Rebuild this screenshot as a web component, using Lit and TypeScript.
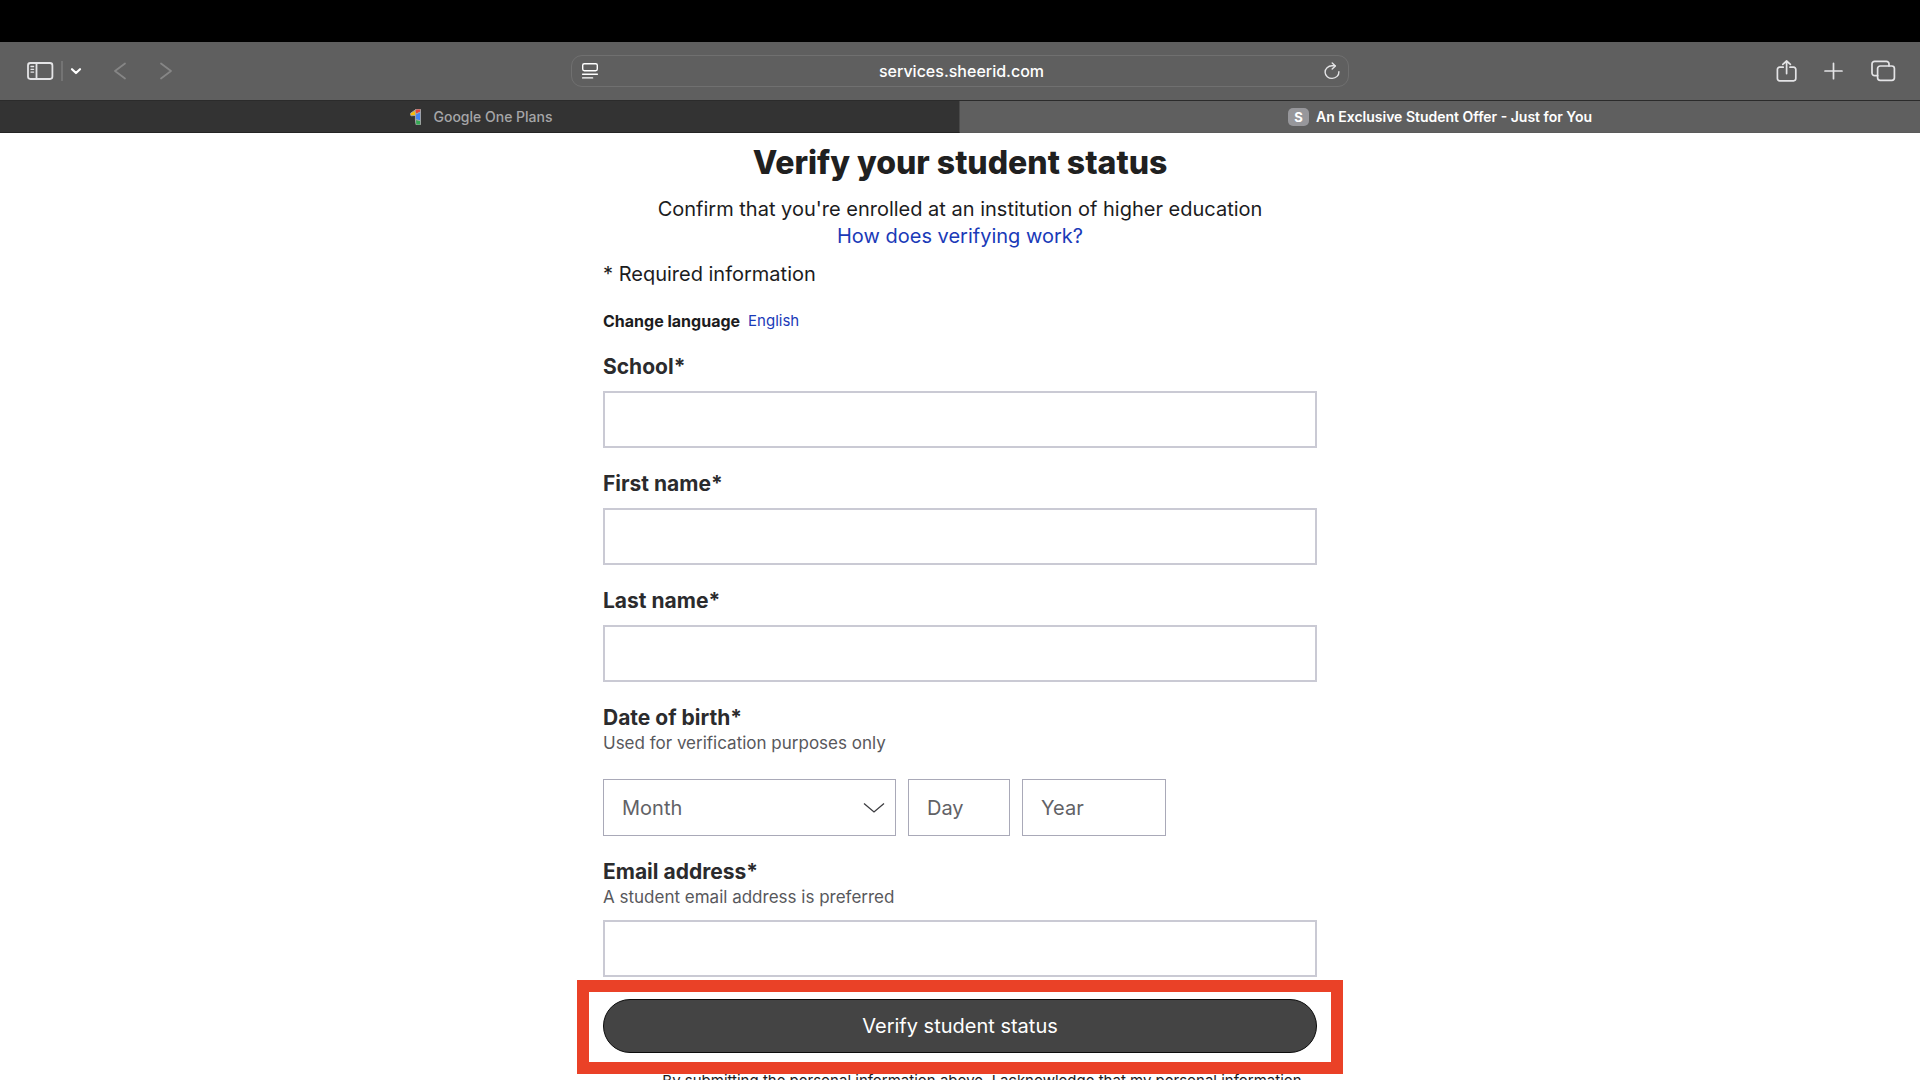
import { LitElement, html, css } from "lit";
import { customElement } from "lit/decorators.js";

const MONTHS = [
  "January", "February", "March", "April", "May", "June", "July",
  "August", "September", "October", "November", "December",
];

@customElement("browser-bar")
class BrowserBar extends LitElement {
  static styles = css`
    :host {
      display: block;
      color: #fff;
    }
    .notch {
      height: 42px;
      background: #000;
    }
    .toolbar {
      display: grid;
      grid-template-columns: 1fr 40.5% 1fr;
      align-items: center;
      height: 59px;
      background: #5f5f5f;
      border-bottom: 1px solid #2b2b2b;
      box-sizing: border-box;
    }
    button {
      display: flex;
      padding: 0;
      border: 0;
      background: none;
      color: #e4e4e6;
      font: inherit;
      cursor: pointer;
    }
    button:disabled {
      color: #868686;
      cursor: default;
    }
    svg {
      display: block;
      fill: none;
      stroke: currentColor;
      stroke-linecap: round;
      stroke-linejoin: round;
    }
    .left {
      display: flex;
      align-items: center;
      padding-left: 26px;
    }
    .divider {
      width: 2px;
      height: 20px;
      margin: 0 7px;
      background: #747474;
    }
    .menu {
      color: #fff;
    }
    .back {
      margin-left: 31px;
    }
    .forward {
      margin-left: 32px;
    }
    .address {
      display: flex;
      align-items: center;
      height: 32px;
      padding: 0 8px 0 9px;
      border: 1px solid #707070;
      border-radius: 11px;
      box-sizing: border-box;
    }
    .url {
      flex: 1;
      min-width: 0;
      border: 0;
      padding: 0;
      outline: 0;
      background: none;
      color: #fff;
      font: 500 16px/20px Inter, sans-serif;
      text-align: center;
    }
    .right {
      display: flex;
      align-items: center;
      justify-content: flex-end;
      gap: 26px;
      padding-right: 24px;
    }
    .tabs {
      display: grid;
      grid-template-columns: 1fr 1fr;
      height: 32px;
      background: #5f5f5f;
    }
    .tab {
      display: flex;
      align-items: center;
      justify-content: center;
      gap: 7px;
      border-bottom: 1px solid #5a5a5a;
      color: #fff;
      font: 600 14px/20px Inter, sans-serif;
      text-decoration: none;
    }
    .idle {
      gap: 12px;
      padding-left: 4px;
      border-bottom-color: #242424;
      border-right: 1px solid #4a4a4a;
      background: #333;
      color: #a6a6a8;
      font-weight: 500;
    }
    .badge {
      width: 21px;
      height: 18px;
      border-radius: 5px;
      background: #97979b;
      font: 700 13px/18px Inter, sans-serif;
      text-align: center;
    }
  `;

  render() {
    return html`
      <div class="notch"></div>
      <div class="toolbar">
        <div class="left">
          <button aria-label="Sidebar">
            <svg width="28" height="20" viewBox="0 0 28 20" stroke-width="1.8">
              <rect x="2" y="2" width="24.4" height="16" rx="2.4" />
              <path d="M10.5 2v16" />
              <path d="M5 5.5h2.6M5 8.3h2.6M5 11.1h2.6" stroke-width="1.3" />
            </svg>
          </button>
          <span class="divider"></span>
          <button class="menu" aria-label="Tab groups">
            <svg width="12" height="12" viewBox="0 0 12 12" stroke-width="2.2">
              <path d="M2 4.2l4 3.8 4-3.8" />
            </svg>
          </button>
          <button class="back" aria-label="Back" disabled>
            <svg width="14" height="20" viewBox="0 0 14 20" stroke-width="1.8">
              <path d="M12 2.5L2 10l10 7.5" />
            </svg>
          </button>
          <button class="forward" aria-label="Forward" disabled>
            <svg width="14" height="20" viewBox="0 0 14 20" stroke-width="1.8">
              <path d="M2 2.500L12 10 2 17.500" />
            </svg>
          </button>
        </div>
        <div class="address">
          <svg width="18" height="18" viewBox="0 0 18 18" stroke="#e4e4e6" stroke-width="1.4">
            <rect x="1.7" y="1.7" width="14.6" height="7" rx="1.6" />
            <path d="M1.6 12.2h14.8M1.6 15.9h10" />
          </svg>
          <input class="url" aria-label="Address" value="services.sheerid.com" />
          <button aria-label="Reload">
            <svg width="16" height="18" viewBox="0 0 16 18" stroke-width="1.4">
              <path d="M14.9 9.800A6.900 6.300 0 1 1 8 3.800h3" />
              <path d="M8.200 1L11.400 3.900 8.200 7" />
            </svg>
          </button>
        </div>
        <div class="right">
          <button aria-label="Share">
            <svg width="22" height="24" viewBox="0 0 22 24" stroke-width="1.7">
              <path d="M7.200 8.200H3.600A2.200 2.200 0 0 0 1.400 10.400v9.200A2.200 2.200 0 0 0 3.600 21.800h14a2.200 2.200 0 0 0 2.200-2.200v-9.200A2.200 2.200 0 0 0 17.600 8.200h-3.600" />
              <path d="M10.600 14.600V2.400M6.800 5.400l3.800-3.400 3.800 3.400" />
            </svg>
          </button>
          <button aria-label="New tab">
            <svg width="20" height="20" viewBox="0 0 20 20" stroke-width="1.7">
              <path d="M1 10h17M9.500 2.300v15.400" />
            </svg>
          </button>
          <button aria-label="Tab overview">
            <svg width="26" height="22" viewBox="0 0 26 22" stroke-width="1.7">
              <path d="M7.600 15.600H4.600A2.600 2.600 0 0 1 2 13V4a2.600 2.600 0 0 1 2.600-2.600h11.800A2.600 2.600 0 0 1 19 4v1.800" />
              <rect x="7.6" y="6" width="16.8" height="14.4" rx="2.6" />
            </svg>
          </button>
        </div>
      </div>
      <nav class="tabs">
        <a class="tab idle" href="#plans">
          <svg width="11" height="16" viewBox="0 0 11 16" stroke="none">
            <path d="M5.600 .8L.6 4.200a1 1 0 0 0-.3 1.400l.8 1.200L6 6.400l1.800-3z" fill="#fbbc04" />
            <path d="M5.200 1.100L6.800 0h2.800a1 1 0 0 1 1 1v2.400L6 5z" fill="#ea4335" />
            <path d="M5.800 5.200l4.800-2.400V12l-4.800-1z" fill="#4285f4" />
            <path d="M5.800 10.600l4.800 1.200v3.200a1 1 0 0 1-1 1H6.800a1 1 0 0 1-1-1z" fill="#34a853" />
          </svg>
          <span>Google One Plans</span>
        </a>
        <a class="tab" href="#offer" aria-current="page">
          <span class="badge">S</span>
          <span>An Exclusive Student Offer - Just for You</span>
        </a>
      </nav>
    `;
  }
}

@customElement("app-root")
class AppRoot extends LitElement {
  static styles = css`
    :host {
      display: flex;
      flex-direction: column;
      height: 100vh;
      overflow: hidden;
      background: #fff;
      color: #1c1c1e;
      font: 20px/27px Inter, sans-serif;
    }
    browser-bar {
      flex: none;
    }
    main {
      flex: 1;
      min-height: 0;
      overflow-y: auto;
      scrollbar-width: none;
    }
    .page {
      display: flex;
      flex-direction: column;
      width: 100%;
      max-width: 714px;
      margin: 0 auto;
      padding: 10px 0 32px;
    }
    h1 {
      margin: 0;
      color: #202020;
      font-size: 32px;
      line-height: 40px;
      font-weight: 800;
      text-align: center;
    }
    p {
      margin: 0;
    }
    a {
      color: #1a3ab8;
      text-decoration: none;
    }
    .intro {
      margin-top: 13px;
      text-align: center;
    }
    .intro a {
      display: block;
    }
    .required {
      margin-top: 11px;
    }
    .language {
      display: flex;
      gap: 8px;
      margin-top: 21px;
      font-size: 16px;
      line-height: 24px;
    }
    .language a {
      font-size: 15px;
    }
    .form {
      display: flex;
      flex-direction: column;
      gap: 24px;
      margin-top: 22px;
    }
    .field {
      display: flex;
      flex-direction: column;
      margin: 0;
      padding: 0;
      border: 0;
    }
    .label {
      padding: 0;
      color: #2b2b2d;
      font-size: 21px;
      line-height: 24px;
      font-weight: 700;
    }
    .hint {
      margin-top: 3px;
      color: #58585c;
      font-size: 17px;
      line-height: 20px;
    }
    .box {
      width: 100%;
      height: 57px;
      margin: 13px 0 0;
      padding: 0 18px;
      border: 2px solid #cacad4;
      border-radius: 0;
      box-sizing: border-box;
      background: #fff;
      color: #626266;
      font: 20px/24px Inter, sans-serif;
      appearance: none;
      outline: 0;
    }
    .plain .box {
      margin-top: 12px;
    }
    .date .box {
      margin: 0;
      border: 1px solid #a9a9b8;
    }
    .box::placeholder {
      color: #626266;
      opacity: 1;
    }
    .date {
      display: grid;
      grid-template-columns: 293px 102px 144px;
      gap: 12px;
      margin-top: 26px;
    }
    .month {
      display: grid;
      align-items: center;
    }
    .month > * {
      grid-area: 1 / 1;
    }
    .month svg {
      justify-self: end;
      margin-right: 11px;
      fill: none;
      stroke: #3c3c40;
      pointer-events: none;
    }
    .action {
      position: relative;
      margin-top: 22px;
    }
    .submit {
      display: block;
      width: 100%;
      height: 54px;
      padding: 0;
      border: 1px solid #0c0c0c;
      border-radius: 28px;
      background: #444;
      color: #fff;
      font: 400 20px/24px Inter, sans-serif;
      cursor: pointer;
    }
    .highlight {
      position: absolute;
      inset: -19px -26px -21px;
      border: 12px solid #ea4127;
      pointer-events: none;
    }
    .terms {
      margin-top: 17px;
      padding-left: 44px;
      font-size: 15px;
      line-height: 22px;
      color: #1c1c1e;
      text-align: center;
    }
  `;

  private textField(id: string, label: string) {
    return html`
      <div class="field plain">
        <label class="label" for=${id}>${label}</label>
        <input class="box" id=${id} type="text" />
      </div>
    `;
  }

  render() {
    return html`
      <browser-bar></browser-bar>
      <main>
        <div class="page">
          <h1>Verify your student status</h1>
          <p class="intro">
            Confirm that you're enrolled at an institution of higher education
            <a href="#how">How does verifying work?</a>
          </p>
          <p class="required">* Required information</p>
          <p class="language"><b>Change language</b><a href="#language">English</a></p>
          <form class="form" @submit=${(e: Event) => e.preventDefault()}>
            ${this.textField("school", "School*")}
            ${this.textField("first", "First name*")}
            ${this.textField("last", "Last name*")}
            <fieldset class="field">
              <legend class="label">Date of birth*</legend>
              <div class="hint">Used for verification purposes only</div>
              <div class="date">
                <div class="month">
                  <select class="box" aria-label="Month">
                    <option>Month</option>
                    ${MONTHS.map((m) => html`<option>${m}</option>`)}
                  </select>
                  <svg width="22" height="12" viewBox="0 0 22 12" stroke-width="1.3">
                    <path d="M1 1.500l10 8.500 10-8.500" />
                  </svg>
                </div>
                <input class="box" aria-label="Day" placeholder="Day" />
                <input class="box" aria-label="Year" placeholder="Year" />
              </div>
            </fieldset>
            <div>
              <div class="field">
                <label class="label" for="email">Email address*</label>
                <span class="hint">A student email address is preferred</span>
                <input class="box" id="email" type="email" />
              </div>
              <div class="action">
                <button class="submit">Verify student status</button>
                <div class="highlight"></div>
              </div>
              <p class="terms">
                By submitting the personal information above, I acknowledge that my personal information
              </p>
            </div>
          </form>
        </div>
      </main>
    `;
  }
}
